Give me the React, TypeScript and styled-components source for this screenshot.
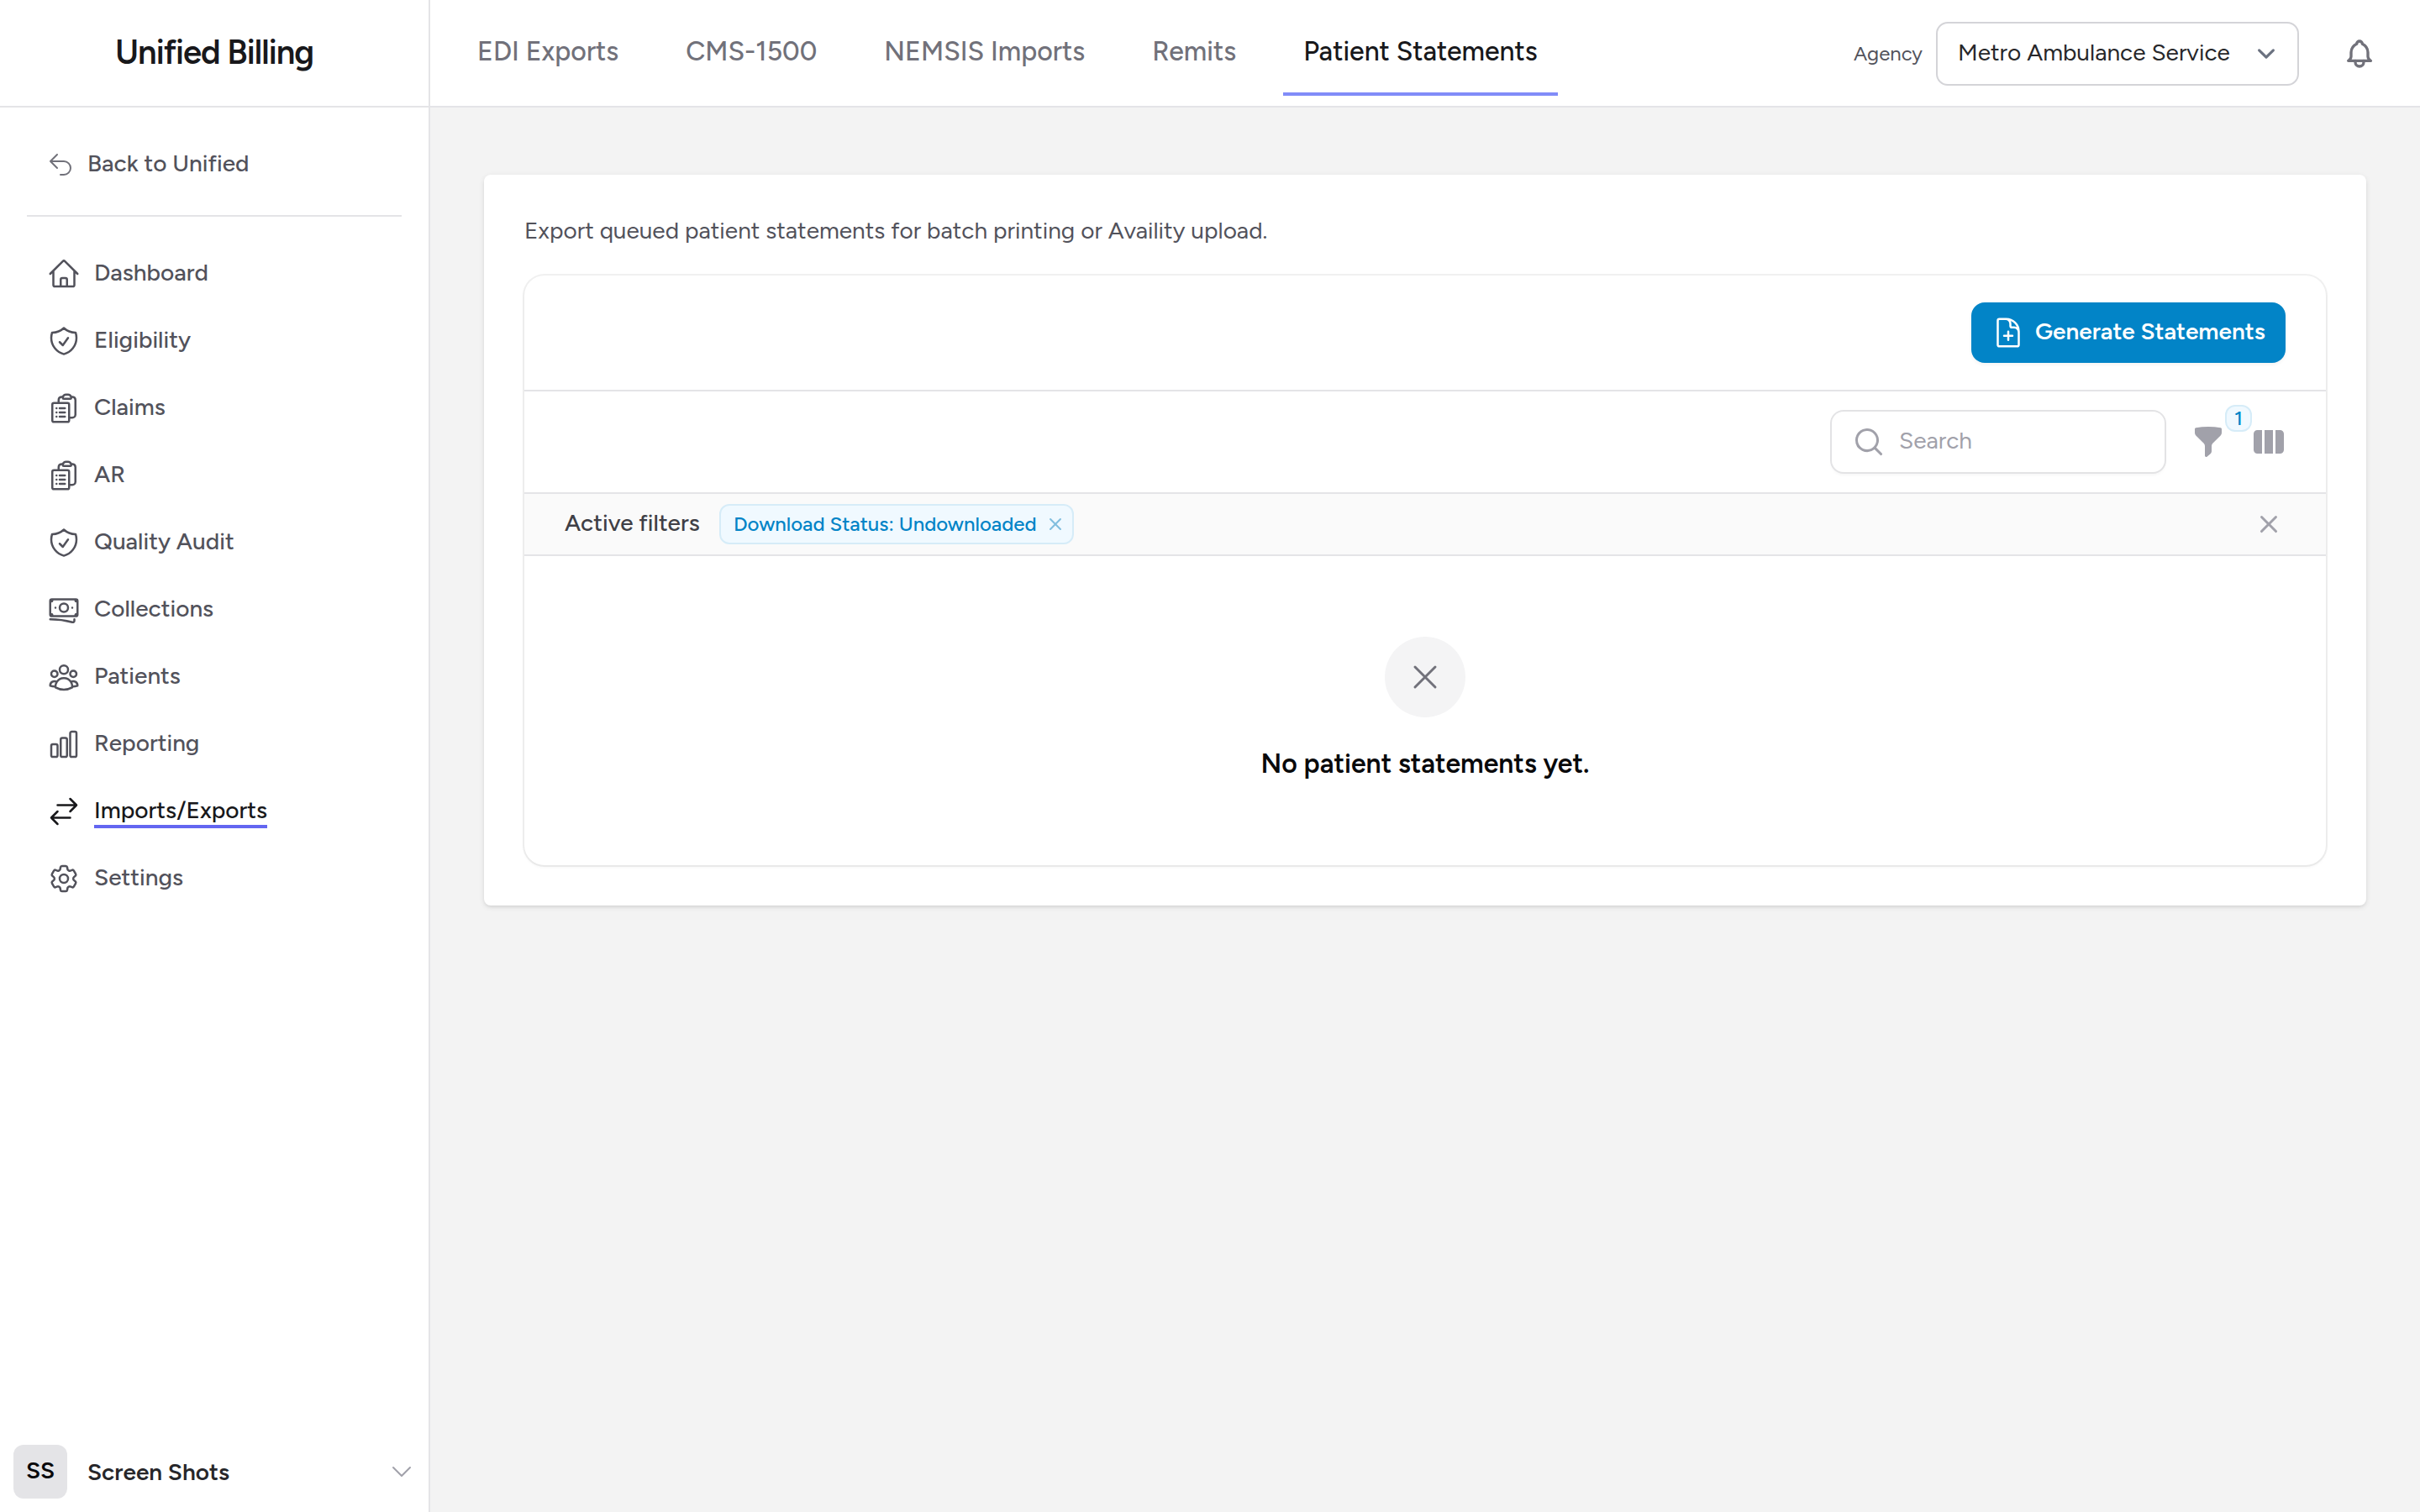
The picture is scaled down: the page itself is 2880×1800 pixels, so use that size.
import React from "react";
import styled, { createGlobalStyle } from "styled-components";
import type { IconType } from "react-icons";
import {
  HiMiniFunnel,
  HiMiniMagnifyingGlass,
  HiMiniViewColumns,
  HiMiniXMark,
  HiOutlineArrowsRightLeft,
  HiOutlineArrowUturnLeft,
  HiOutlineBanknotes,
  HiOutlineChartBar,
  HiOutlineChevronDown,
  HiOutlineClipboardDocumentList,
  HiOutlineCog6Tooth,
  HiOutlineDocumentPlus,
  HiOutlineHome,
  HiOutlineShieldCheck,
  HiOutlineUserGroup,
  HiOutlineXMark,
} from "react-icons/hi2";

const GlobalStyle = createGlobalStyle`
  *, *::before, *::after { box-sizing: border-box; }
  body {
    margin: 0;
    background: #f4f4f5;
    font-family: Figtree, Lato, "Open Sans", sans-serif;
    -webkit-font-smoothing: antialiased;
  }
  svg { display: block; flex: none; }
`;

const Shell = styled.div`
  display: grid;
  grid-template-columns: 512px minmax(0, 1fr);
  width: 2880px;
  height: 1800px;
  overflow: hidden;
  background: #f3f3f3;
`;

const Sidebar = styled.aside`
  display: flex;
  flex-direction: column;
  background: #fff;
  border-right: 2px solid #e4e4e7;
`;

const Brand = styled.div`
  display: flex;
  align-items: center;
  justify-content: center;
  height: 128px;
  padding-bottom: 2px;
  border-bottom: 2px solid #e4e4e7;
  font-size: 40px;
  line-height: 56px;
  font-weight: 600;
  letter-spacing: -1px;
  color: #18181b;
`;

const BackLink = styled.a`
  display: flex;
  align-items: center;
  gap: 16px;
  margin: 2px 32px 0;
  height: 128px;
  padding: 6px 24px 0;
  border-bottom: 2px solid #e4e4e7;
  color: #71717a;
`;

const BackLabel = styled.span`
  padding-bottom: 4px;
  font-size: 28px;
  line-height: 40px;
  font-weight: 500;
  color: #52525b;
`;

const NavList = styled.nav`
  display: flex;
  flex-direction: column;
  padding: 28px 32px 0;
`;

const NavItem = styled.a<{ $active?: boolean }>`
  display: flex;
  align-items: center;
  gap: 16px;
  height: 80px;
  padding: 0 24px;
  color: ${(p) => (p.$active ? "#18181b" : "#52525b")};
`;

const NavLabel = styled.span<{ $active?: boolean }>`
  margin-top: ${(p) => (p.$active ? "-2px" : "-4px")};
  font-size: 28px;
  line-height: 40px;
  height: ${(p) => (p.$active ? "42px" : "40px")};
  font-weight: 500;
  border-bottom: ${(p) => (p.$active ? "4px solid #6366f1" : "0")};
`;

const UserMenu = styled.div`
  display: flex;
  align-items: center;
  gap: 24px;
  margin-top: auto;
  padding: 16px;
`;

const Avatar = styled.div`
  display: flex;
  align-items: center;
  justify-content: center;
  width: 64px;
  height: 64px;
  padding-bottom: 4px;
  border-radius: 12px;
  background: #e4e4e7;
  color: #09090b;
  font-size: 28px;
  font-weight: 600;
`;

const UserName = styled.span`
  flex: 1;
  font-size: 28px;
  line-height: 40px;
  font-weight: 600;
  color: #27272a;
`;

const Chevron = styled(HiOutlineChevronDown)`
  color: #a1a1aa;
`;

const Main = styled.main`
  display: flex;
  flex-direction: column;
`;

const TopBar = styled.header`
  display: flex;
  align-items: flex-start;
  height: 128px;
  padding: 0 52px 0 32px;
  background: #fff;
  border-bottom: 2px solid #e4e4e7;
`;

const Tabs = styled.nav`
  display: flex;
  gap: 32px;
  flex: 1;
`;

const Tab = styled.a<{ $active?: boolean }>`
  height: 114px;
  padding: 37px 24px 0;
  white-space: nowrap;
  font-size: 32px;
  line-height: 48px;
  font-weight: 500;
  color: ${(p) => (p.$active ? "#18181b" : "#71717a")};
  border-bottom: 4px solid ${(p) => (p.$active ? "#818cf8" : "transparent")};
`;

const AgencyLabel = styled.label`
  padding: 44px 16px 0 0;
  font-size: 24px;
  line-height: 40px;
  color: #52525b;
`;

const AgencySelect = styled.div`
  display: flex;
  align-items: center;
  justify-content: space-between;
  width: 432px;
  height: 76px;
  margin-top: 26px;
  padding: 0 16px 0 24px;
  border: 2px solid #d4d4d8;
  border-radius: 14px;
  background: #fff;
`;

const AgencyValue = styled.span`
  padding-bottom: 4px;
  font-size: 28px;
  line-height: 40px;
  color: #27272a;
`;

const BellButton = styled.button`
  margin: 44px 0 0 52px;
  padding: 0;
  border: 0;
  background: none;
  color: #71717a;
`;

const Card = styled.section`
  margin: 80px 64px 0;
  height: 870px;
  padding: 48px;
  border-radius: 8px;
  background: #fff;
  box-shadow: 0 2px 6px rgba(0, 0, 0, 0.1), 0 2px 4px -2px rgba(0, 0, 0, 0.1);
`;

const Intro = styled.p`
  margin: -2px 0 34px;
  height: 40px;
  font-size: 28px;
  line-height: 40px;
  color: #52525b;
`;

const TablePanel = styled.div`
  display: flex;
  flex-direction: column;
  height: 702px;
  border-radius: 24px;
  background: #fff;
  box-shadow: 0 0 0 2px rgba(9, 9, 11, 0.06), 0 2px 4px rgba(0, 0, 0, 0.05);
`;

const PanelHeader = styled.div`
  display: flex;
  justify-content: flex-end;
  height: 138px;
  padding: 32px 48px;
  border-bottom: 2px solid #e4e4e7;
`;

const PrimaryButton = styled.button`
  display: flex;
  align-items: center;
  gap: 12px;
  width: 374px;
  height: 72px;
  padding: 0 0 0 24px;
  border: 0;
  border-radius: 16px;
  background: #0284c7;
  color: #fff;
  box-shadow: 0 2px 4px rgba(0, 0, 0, 0.05);
  font-family: inherit;
`;

const ButtonLabel = styled.span`
  padding-bottom: 4px;
  white-space: nowrap;
  font-size: 28px;
  line-height: 40px;
  font-weight: 600;
`;

const PanelTools = styled.div`
  display: flex;
  align-items: center;
  justify-content: flex-end;
  height: 122px;
  padding: 0 48px;
  border-bottom: 2px solid #e4e4e7;
  color: #a1a1aa;
`;

const SearchField = styled.div`
  display: flex;
  align-items: center;
  gap: 16px;
  width: 396px;
  height: 72px;
  margin-right: 32px;
  padding: 0 24px;
  border-radius: 14px;
  background: #fff;
  box-shadow: 0 0 0 2px #e3e3e5, 0 3px 4px rgba(0, 0, 0, 0.05);
`;

const Placeholder = styled.span`
  padding-bottom: 4px;
  font-size: 28px;
  line-height: 40px;
  color: #a1a1aa;
`;

const FilterButton = styled.div`
  position: relative;
  margin-right: 32px;
`;

const CountBadge = styled.span`
  position: absolute;
  left: 40px;
  top: -24px;
  width: 32px;
  height: 32px;
  border: 2px solid #d6ecf8;
  border-radius: 12px;
  background: #f0f9ff;
  color: #0284c7;
  font-size: 24px;
  line-height: 28px;
  font-weight: 500;
  text-align: center;
`;

const FilterBar = styled.div`
  display: flex;
  align-items: center;
  height: 74px;
  padding: 0 48px;
  border-bottom: 2px solid #e4e4e7;
  background: #fafafa;
  color: #a1a1aa;
`;

const FilterTitle = styled.span`
  width: 184px;
  padding-bottom: 4px;
  font-size: 28px;
  line-height: 40px;
  font-weight: 500;
  color: #3f3f46;
`;

const FilterChip = styled.span`
  display: flex;
  align-items: center;
  justify-content: space-between;
  width: 422px;
  height: 48px;
  margin-right: auto;
  padding: 0 6px 0 15px;
  border: 2px solid #d6ecf8;
  border-radius: 12px;
  background: #f0f9ff;
  color: #81bedf;
`;

const ChipLabel = styled.span`
  white-space: nowrap;
  font-size: 24px;
  line-height: 32px;
  font-weight: 500;
  color: #0284c7;
`;

const EmptyState = styled.div`
  display: flex;
  flex-direction: column;
  align-items: center;
  padding-top: 96px;
`;

const EmptyIcon = styled.div`
  display: flex;
  align-items: center;
  justify-content: center;
  width: 96px;
  height: 96px;
  border-radius: 50%;
  background: #f4f4f5;
  color: #71717a;
`;

const EmptyTitle = styled.h4`
  margin: 31px 0 0;
  font-size: 32px;
  line-height: 48px;
  font-weight: 600;
  color: #09090b;
`;

type NavEntry = { label: string; icon: IconType; active?: boolean };

const navEntries: NavEntry[] = [
  { label: "Dashboard", icon: HiOutlineHome },
  { label: "Eligibility", icon: HiOutlineShieldCheck },
  { label: "Claims", icon: HiOutlineClipboardDocumentList },
  { label: "AR", icon: HiOutlineClipboardDocumentList },
  { label: "Quality Audit", icon: HiOutlineShieldCheck },
  { label: "Collections", icon: HiOutlineBanknotes },
  { label: "Patients", icon: HiOutlineUserGroup },
  { label: "Reporting", icon: HiOutlineChartBar },
  { label: "Imports/Exports", icon: HiOutlineArrowsRightLeft, active: true },
  { label: "Settings", icon: HiOutlineCog6Tooth },
];

const tabEntries = [
  { label: "EDI Exports" },
  { label: "CMS-1500" },
  { label: "NEMSIS Imports" },
  { label: "Remits" },
  { label: "Patient Statements", active: true },
];

const BellIcon = () => (
  <svg width="40" height="40" viewBox="0 0 24 24" fill="none" stroke="currentColor" strokeWidth="2" strokeLinecap="round" strokeLinejoin="round">
    <path d="M10 5a2 2 0 1 1 4 0a7 7 0 0 1 4 6v3a4 4 0 0 0 2 3h-16a4 4 0 0 0 2 -3v-3a7 7 0 0 1 4 -6" />
    <path d="M9 17v1a3 3 0 0 0 6 0v-1" />
  </svg>
);

const SelectArrow = () => (
  <svg width="42" height="42" viewBox="0 0 20 20" fill="none" stroke="#6b7280" strokeWidth="1.5" strokeLinecap="round" strokeLinejoin="round">
    <path d="m6 8 4 4 4-4" />
  </svg>
);

export default function App() {
  return (
    <Shell>
      <GlobalStyle />
      <Sidebar>
        <Brand>Unified Billing</Brand>
        <BackLink>
          <HiOutlineArrowUturnLeft size={32} />
          <BackLabel>Back to Unified</BackLabel>
        </BackLink>
        <NavList>
          {navEntries.map(({ label, icon: Icon, active }) => (
            <NavItem key={label} $active={active}>
              <Icon size={40} />
              <NavLabel $active={active}>{label}</NavLabel>
            </NavItem>
          ))}
        </NavList>
        <UserMenu>
          <Avatar>SS</Avatar>
          <UserName>Screen Shots</UserName>
          <Chevron size={32} />
        </UserMenu>
      </Sidebar>
      <Main>
        <TopBar>
          <Tabs>
            {tabEntries.map(({ label, active }) => (
              <Tab key={label} $active={active}>
                {label}
              </Tab>
            ))}
          </Tabs>
          <AgencyLabel>Agency</AgencyLabel>
          <AgencySelect>
            <AgencyValue>Metro Ambulance Service</AgencyValue>
            <SelectArrow />
          </AgencySelect>
          <BellButton aria-label="Notifications">
            <BellIcon />
          </BellButton>
        </TopBar>
        <Card>
          <Intro>Export queued patient statements for batch printing or Availity upload.</Intro>
          <TablePanel>
            <PanelHeader>
              <PrimaryButton>
                <HiOutlineDocumentPlus size={40} />
                <ButtonLabel>Generate Statements</ButtonLabel>
              </PrimaryButton>
            </PanelHeader>
            <PanelTools>
              <SearchField>
                <HiMiniMagnifyingGlass size={40} />
                <Placeholder>Search</Placeholder>
              </SearchField>
              <FilterButton>
                <HiMiniFunnel size={40} />
                <CountBadge>1</CountBadge>
              </FilterButton>
              <HiMiniViewColumns size={40} />
            </PanelTools>
            <FilterBar>
              <FilterTitle>Active filters</FilterTitle>
              <FilterChip>
                <ChipLabel>Download Status: Undownloaded</ChipLabel>
                <HiMiniXMark size={28} />
              </FilterChip>
              <HiMiniXMark size={40} />
            </FilterBar>
            <EmptyState>
              <EmptyIcon>
                <HiOutlineXMark size={48} />
              </EmptyIcon>
              <EmptyTitle>No patient statements yet.</EmptyTitle>
            </EmptyState>
          </TablePanel>
        </Card>
      </Main>
    </Shell>
  );
}
